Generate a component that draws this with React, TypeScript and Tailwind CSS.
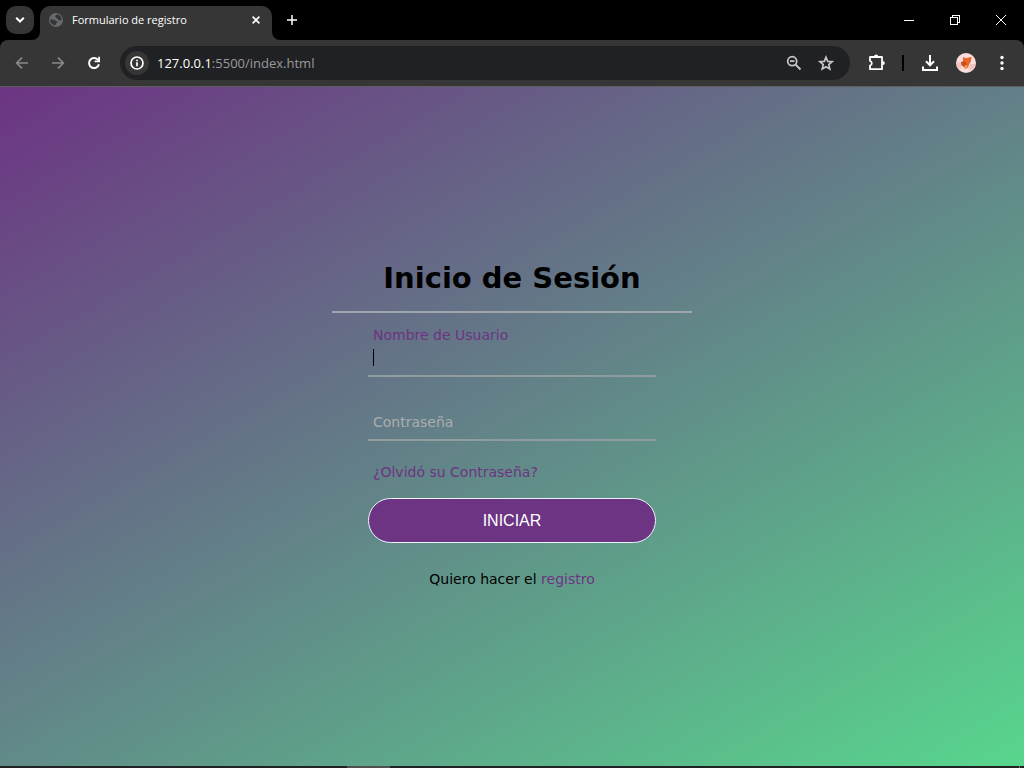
import { useState } from "react";
import type { ReactNode } from "react";

function IconButton({
  label,
  className = "",
  children,
}: {
  label: string;
  className?: string;
  children: ReactNode;
}) {
  return (
    <button
      type="button"
      aria-label={label}
      className={`flex shrink-0 items-center justify-center ${className}`}
    >
      {children}
    </button>
  );
}

function TabStrip() {
  return (
    <div className="flex h-10 shrink-0 bg-black">
      <IconButton
        label="Buscar pestañas"
        className="ml-1.5 mt-1.5 size-7 rounded-[10px] bg-[#363636] text-white"
      >
        <svg width="10" height="8" viewBox="0 0 10 8" fill="none" stroke="currentColor" strokeWidth="2">
          <path d="M1.2 1.7 5 5.5l3.8-3.8" />
        </svg>
      </IconButton>
      <div className="relative ml-1.5 mt-1.5 flex w-58 items-center rounded-t-[10px] bg-[#363636] pb-1.5 pl-2 pr-2.5">
        <svg className="absolute -left-2 bottom-0 size-2" viewBox="0 0 8 8" fill="#363636">
          <path d="M8 0v8H0a8 8 0 0 0 8-8Z" />
        </svg>
        <svg className="absolute -right-2 bottom-0 size-2" viewBox="0 0 8 8" fill="#363636">
          <path d="M0 0v8h8a8 8 0 0 1-8-8Z" />
        </svg>
        <svg className="size-4" viewBox="0 0 16 16">
          <circle cx="8" cy="8" r="7" fill="#666a6f" />
          <path
            d="M2.2 7.4c1.5-.3 2.2.4 3.5.4 1.5 0 1.500 1.200 2.700 1.300 1.100.1 1 1.200.3 1.800-.8.6-.6 1.400-1.900 2.600a5.700 5.700 0 0 1-4.600-6.100Z"
            fill="#363636"
          />
          <path
            d="M8.800 2.300c-.2 1.100-1.600 1-1.700 2.100-.1.900 1.300.8 1.500 1.700.2.800 1.600.5 1.700 1.600.1.900 1.400 1 2.900.4.300-.1.400-.1.500-.3a5.700 5.700 0 0 0-4.900-5.500Z"
            fill="#363636"
          />
        </svg>
        <span className="ml-2 flex-1 whitespace-nowrap font-['Open_Sans',sans-serif] text-[11px] leading-4 text-white">
          Formulario de registro
        </span>
        <IconButton label="Cerrar pestaña" className="size-3 text-white">
          <svg width="8" height="8" viewBox="0 0 8 8" stroke="currentColor" strokeWidth="1.600">
            <path d="m.6.6 6.800 6.800M7.400.6.6 7.400" />
          </svg>
        </IconButton>
      </div>
      <IconButton label="Nueva pestaña" className="ml-1.5 mt-1.5 size-7 text-white">
        <svg width="10" height="10" viewBox="0 0 10 10" stroke="currentColor" strokeWidth="1.500">
          <path d="M5 0v10M0 5h10" />
        </svg>
      </IconButton>
      <div className="ml-auto flex text-white">
        <IconButton label="Minimizar" className="w-[46px]">
          <svg width="10" height="10" viewBox="0 0 10 10" stroke="currentColor" shapeRendering="crispEdges">
            <path d="M0 5.500h10" />
          </svg>
        </IconButton>
        <IconButton label="Restaurar" className="w-[46px]">
          <svg width="10" height="10" viewBox="0 0 10 10" fill="none" stroke="currentColor" shapeRendering="crispEdges">
            <path d="M.5 2.500h7v7h-7ZM2.500 2V.5h7v7H8" />
          </svg>
        </IconButton>
        <IconButton label="Cerrar" className="w-[46px]">
          <svg width="10" height="10" viewBox="0 0 10 10" stroke="currentColor">
            <path d="m0 0 10 10M10 0 0 10" />
          </svg>
        </IconButton>
      </div>
    </div>
  );
}

function Toolbar() {
  return (
    <div className="shrink-0 bg-black">
      <div className="flex h-[47px] items-center rounded-t-lg border-b border-[#5f5f5f] bg-[#363636] pl-2 text-white">
        <IconButton label="Atrás" className="size-7 text-[#898989]">
          <svg width="14" height="14" viewBox="0 0 14 14" fill="none" stroke="currentColor" strokeWidth="1.700">
            <path d="M13 7H2.200M7 1.700 1.700 7 7 12.300" />
          </svg>
        </IconButton>
        <IconButton label="Adelante" className="ml-2 size-7 text-[#898989]">
          <svg width="14" height="14" viewBox="0 0 14 14" fill="none" stroke="currentColor" strokeWidth="1.700">
            <path d="M1 7h10.800M7 1.700 12.300 7 7 12.300" />
          </svg>
        </IconButton>
        <IconButton label="Recargar" className="ml-2 size-7">
          <svg width="14" height="14" viewBox="0 0 14 14">
            <path
              d="M11.200 4.300A5 5 0 1 0 11.900 8.200"
              fill="none"
              stroke="currentColor"
              strokeWidth="2"
            />
            <path d="M13 .8v5.400H7.600V4.400h3.600V.8Z" fill="currentColor" />
          </svg>
        </IconButton>
        <div className="ml-3 flex h-[34px] min-w-0 flex-1 items-center rounded-full bg-[#202124] pl-[5px] pr-3.5">
          <IconButton label="Información del sitio" className="size-6 rounded-full bg-[#363636]">
            <svg width="16" height="16" viewBox="0 0 16 16" fill="none" stroke="currentColor">
              <circle cx="8" cy="8" r="6" strokeWidth="1.700" />
              <path d="M8 7.200v4M8 4.700v1.600" strokeWidth="1.700" />
            </svg>
          </IconButton>
          <span className="ml-2 min-w-0 flex-1 truncate font-['Open_Sans',sans-serif] text-[13px] leading-5 text-[#9a9a9a]">
            <span className="text-white">127.0.0.1</span>:5500/index.html
          </span>
          <IconButton label="Zoom" className="size-5 text-[#c7c7c7]">
            <svg width="16" height="16" viewBox="0 0 16 16" fill="none" stroke="currentColor" strokeWidth="1.800">
              <circle cx="6.200" cy="6.200" r="4.500" />
              <path d="m9.500 9.500 5 5M4 6.200h4.400" />
            </svg>
          </IconButton>
          <IconButton label="Añadir a marcadores" className="ml-3 size-5 text-[#c7c7c7]">
            <svg width="18" height="18" viewBox="0 0 24 24" fill="none" stroke="currentColor" strokeWidth="2.200">
              <path d="m12 4.300 2.300 5.500 5.900.5-4.500 3.900 1.400 5.800-5.100-3.100L6.900 20l1.400-5.800-4.500-3.900 5.900-.5Z" />
            </svg>
          </IconButton>
        </div>
        <IconButton label="Extensiones" className="ml-3 size-7">
          <svg width="18" height="18" viewBox="0 0 18 18">
            <path
              d="M3 3h12v12.200H3v-3.600a2.500 2.500 0 0 0 0-4.800Z"
              fill="none"
              stroke="currentColor"
              strokeWidth="1.800"
              strokeLinejoin="round"
            />
            <path d="M7 2.500a2.100 2.100 0 0 1 4.200 0ZM15.700 7a2.100 2.100 0 0 1 0 4.200Z" fill="currentColor" />
          </svg>
        </IconButton>
        <span className="ml-3 h-4 w-0.5 bg-black" />
        <IconButton label="Descargas" className="ml-3 size-7">
          <svg width="16" height="16" viewBox="0 0 16 16" fill="none" stroke="currentColor" strokeWidth="2">
            <path d="M8 0v10M4 6.300l4 4 4-4M1 11.500V15h14v-3.500" />
          </svg>
        </IconButton>
        <IconButton label="Perfil" className="ml-3 size-5">
          <svg width="20" height="20" viewBox="0 0 20 20">
            <circle cx="10" cy="10" r="10" fill="#fbdcdc" />
            <path d="M0 10 6 9l-1 7-3-1ZM14 11l5.500 0-3 6-4-1Z" fill="#f4c0c0" />
            <path d="m7 4 3 1.200 5.500-1.400-.6 4.700-1.900 3-1 3-2.500 1.500-2.500-2.500Z" fill="#e8672a" />
            <path d="m5 9 3.500-1 2.500 3-1 3-4.500-1.500Z" fill="#c4501a" />
            <path d="m8 13 3-1 .5 2.500L9.500 16Z" fill="#f0a34d" />
          </svg>
        </IconButton>
        <IconButton label="Menú" className="ml-3 mr-2 size-7">
          <svg width="4" height="16" viewBox="0 0 4 16" fill="currentColor">
            <circle cx="2" cy="2.500" r="1.700" />
            <circle cx="2" cy="8" r="1.700" />
            <circle cx="2" cy="13.500" r="1.700" />
          </svg>
        </IconButton>
      </div>
    </div>
  );
}

function LoginForm() {
  const [user, setUser] = useState("");
  const [password, setPassword] = useState("");

  return (
    <form
      className="w-[360px] font-[Verdana,'DejaVu_Sans',sans-serif] text-[14px] leading-5"
      onSubmit={(event) => event.preventDefault()}
    >
      <h1 className="border-b-2 border-[#a0a5ab] pb-3.5 text-center text-[29px] font-bold leading-[38px] text-black">
        Inicio de Sesión
      </h1>
      <div className="px-9 pt-3">
        <div className="border-b-2 border-[#909c9e] px-[5px]">
          <label htmlFor="user" className="block text-[#6c3483]">
            Nombre de Usuario
          </label>
          <div className="relative">
            <input
              id="user"
              type="text"
              value={user}
              onChange={(event) => setUser(event.target.value)}
              className="block h-[30px] w-full bg-transparent pb-2 caret-transparent outline-none"
            />
            <span className="absolute left-0 top-1 h-[17px] w-px bg-black" />
          </div>
        </div>
        <div className="mt-[34px] border-b-2 border-[#909c9e] px-[5px]">
          <input
            id="password"
            type="password"
            aria-label="Contraseña"
            placeholder="Contraseña"
            value={password}
            onChange={(event) => setPassword(event.target.value)}
            className="block h-7 w-full bg-transparent pb-1.5 outline-none placeholder:text-[#adadad] placeholder:opacity-100"
          />
        </div>
        <a href="#recuperar" className="mt-[21px] block pl-[5px] text-[#6c3483]">
          ¿Olvidó su Contraseña?
        </a>
        <button
          type="submit"
          className="mt-4 block h-[45px] w-full rounded-full border border-[#e9f4fb] bg-[#6c3483] pt-0.5 font-['Liberation_Sans',Arial,sans-serif] text-[16px] text-white"
        >
          INICIAR
        </button>
        <p className="mb-1.5 mt-[26px] text-center text-black">
          Quiero hacer el{" "}
          <a href="#registro" className="text-[#6c3483]">
            registro
          </a>
        </p>
      </div>
    </form>
  );
}

export default function App() {
  return (
    <div className="flex min-h-screen flex-col">
      <TabStrip />
      <Toolbar />
      <main className="flex flex-1 items-center justify-center bg-[linear-gradient(150deg,#6c3483,#58d68d)]">
        <LoginForm />
      </main>
      <div className="flex h-0.5 shrink-0 bg-[#202224]">
        <span className="ml-[347px] w-[43px] bg-[#505050]" />
        <span className="ml-auto mr-1 w-px bg-[#707070]" />
      </div>
    </div>
  );
}
